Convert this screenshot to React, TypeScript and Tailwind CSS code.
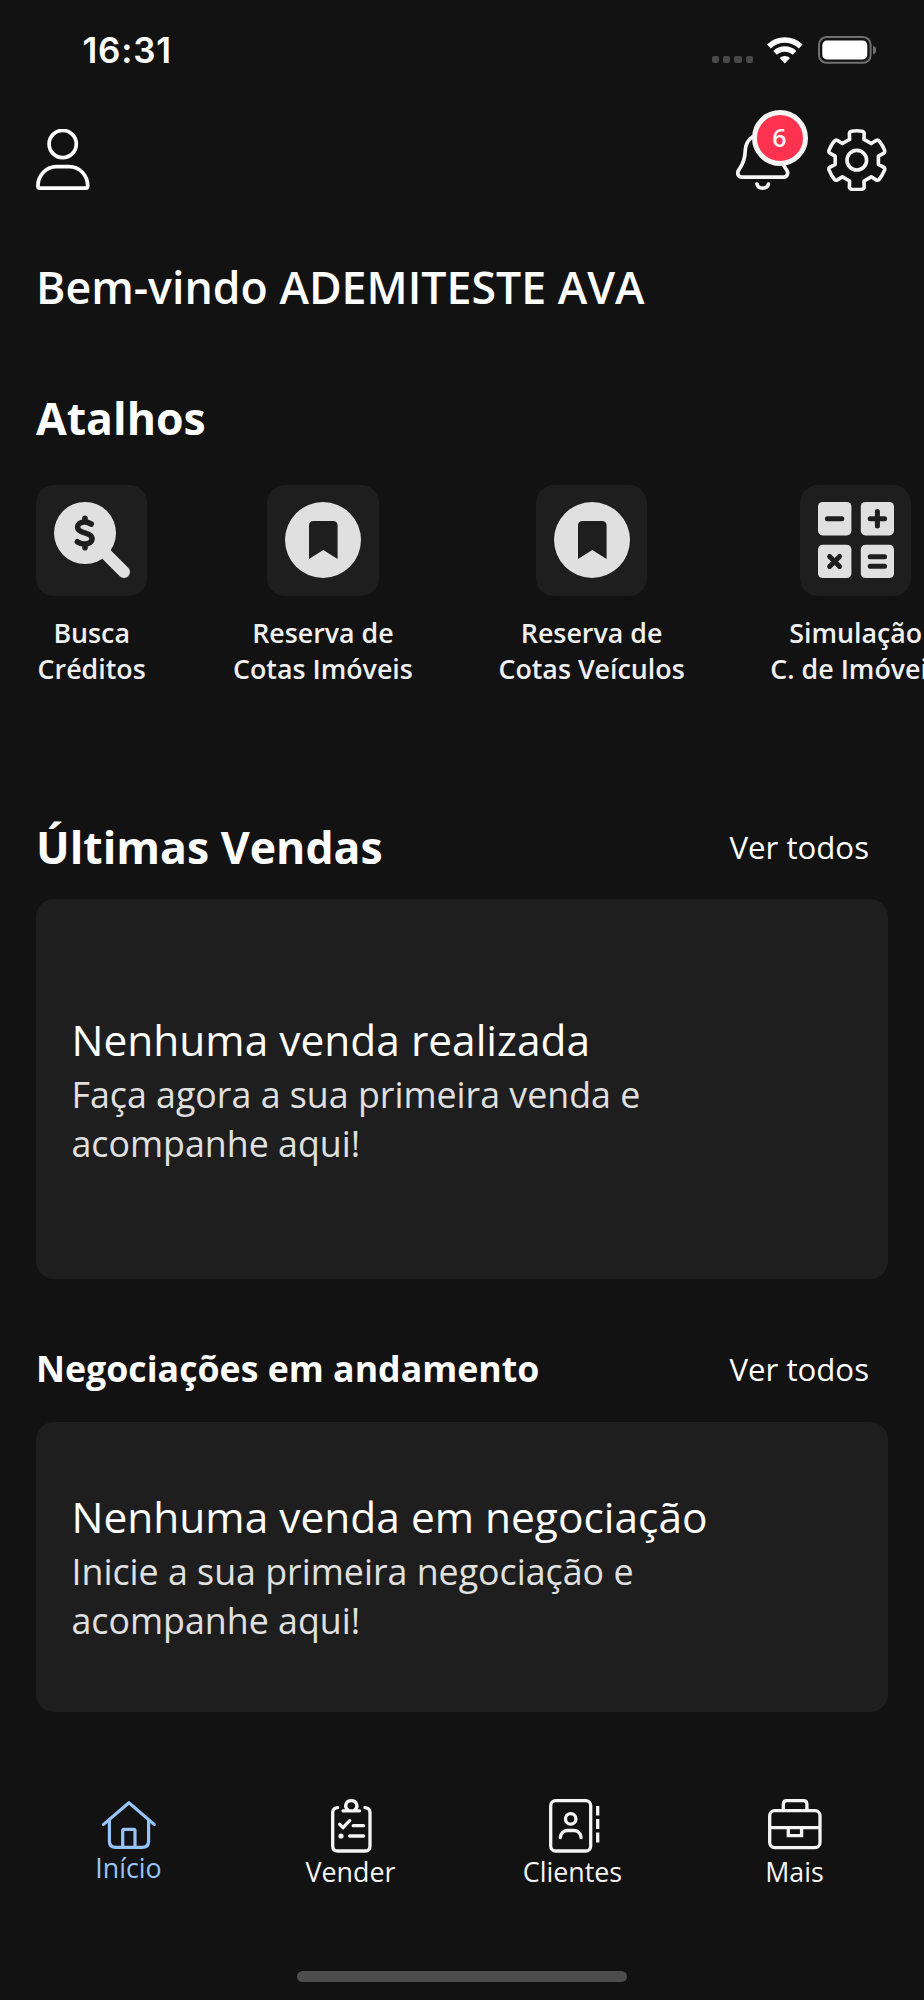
import type { ReactNode } from "react";

function rotate(x: number, y: number, deg: number) {
  const a = (deg * Math.PI) / 180;
  const rx = 29.8 + x * Math.cos(a) - y * Math.sin(a);
  const ry = 31.2 + x * Math.sin(a) + y * Math.cos(a);
  return `${rx.toFixed(2)} ${ry.toFixed(2)}`;
}

// six identical teeth around the center
const gearPath =
  [0, 60, 120, 180, 240, 300]
    .map((deg, i) => {
      const p = (x: number, y: number) => rotate(x, y, -deg);
      return `${i === 0 ? "M" : "L"}${p(7.2, -20.8)}L${p(7.4, -27)}Q${p(7.2, -28.6)} ${p(5.2, -29)}Q${p(0, -29.8)} ${p(-5.2, -29)}Q${p(-7.2, -28.6)} ${p(-7.4, -27)}L${p(-7.2, -20.8)}`;
    })
    .join("") + "Z";

function PersonIcon() {
  return (
    <svg width="54" height="62" viewBox="0 0 54 62" fill="none" stroke="currentColor" strokeWidth="3.7" strokeLinejoin="round">
      <circle cx="26.7" cy="15" r="13.6" />
      <path d="M1.9 57C1.9 46 10.5 37.7 20.5 37.7H33C43.5 37.7 51.7 46 51.7 57Q51.7 59.1 49.8 59.1H3.8Q1.9 59.1 1.9 57Z" />
    </svg>
  );
}

function BellIcon() {
  return (
    <svg width="54" height="62" viewBox="0 0 54 62" fill="none" stroke="currentColor" strokeWidth="3.7" strokeLinecap="round" strokeLinejoin="round">
      <path d="M26.6 4C17 5 9.6 12 9.3 21C9.1 29 7.5 34.5 3.2 40.3C0.4 44 2 48.2 6 48.2H47.4C51.4 48.2 53 44 50.2 40.3C45.8 34.5 44.2 29 44 21C43.7 12 36.2 5 26.6 4Z" />
      <path d="M21 55C22 60.6 31.4 60.6 32.4 55" />
    </svg>
  );
}

function GearIcon() {
  return (
    <svg width="60" height="62" viewBox="0 0 60 62" fill="none" stroke="currentColor" strokeWidth="3.6" strokeLinejoin="round">
      <path d={gearPath} />
      <circle cx="29.8" cy="31.2" r="9.8" />
    </svg>
  );
}

function SearchMoneyIcon() {
  return (
    <svg width="76" height="76" viewBox="0 0 76 76" fill="none" strokeLinecap="round">
      <circle cx="31" cy="31" r="31" fill="#e0e0e0" />
      <path d="M48 48L70 70" stroke="#e0e0e0" strokeWidth="12" />
      <path
        d="M37.2 22C34.8 20.6 32.8 20 30.6 20C26.5 20 23.6 22.3 23.6 25.3C23.6 28.6 26.6 29.8 30.7 30.9C34.9 32 38 33.3 38 36.6C38 40 34.9 42.1 31 42.1C28.2 42.1 25.6 41.2 23.4 39.8M31 16.3V20M31 42V45.7"
        stroke="#1e1e1e"
        strokeWidth="5.6"
      />
    </svg>
  );
}

function BookmarkIcon() {
  return (
    <svg width="76" height="76" viewBox="0 0 76 76">
      <circle cx="38" cy="38" r="38" fill="#e0e0e0" />
      <path d="M24 57V23.6Q24 19 28.6 19H48Q52.6 19 52.6 23.6V57L38.3 48Z" fill="#1e1e1e" />
    </svg>
  );
}

function CalculatorIcon() {
  return (
    <svg width="76" height="76" viewBox="0 0 76 76">
      <g fill="#e0e0e0">
        <rect width="33.4" height="33.4" rx="4.6" />
        <rect x="42.8" width="33.2" height="33.4" rx="4.6" />
        <rect y="42.8" width="33.4" height="33.2" rx="4.6" />
        <rect x="42.8" y="42.8" width="33.2" height="33.2" rx="4.6" />
      </g>
      <path
        d="M9.4 16.8H23.8M52.2 16.8H66.6M59.4 9.6V24M11.6 54.4L21.6 64.4M21.6 54.4L11.6 64.4M52.2 54.7H66.6M52.2 64.3H66.6"
        stroke="#1e1e1e"
        strokeWidth="5"
        strokeLinecap="round"
      />
    </svg>
  );
}

function HomeIcon() {
  return (
    <svg width="54" height="48" viewBox="0 0 54 48" fill="none" stroke="currentColor" strokeWidth="3.2" strokeLinecap="round" strokeLinejoin="round">
      <path d="M1.6 23.4L26.9 1.7L52.2 23.4" />
      <path d="M7.4 19.5V40Q7.4 46.4 13.8 46.4H40.2Q46.6 46.4 46.6 40V19.5" />
      <path d="M20.7 46V29.8Q20.7 28.3 22.2 28.3H31.5Q33 28.3 33 29.8V46" />
    </svg>
  );
}

function ClipboardIcon() {
  return (
    <svg width="41" height="54" viewBox="0 0 41 54" fill="none" stroke="currentColor" strokeWidth="3.3" strokeLinecap="round" strokeLinejoin="round">
      <path d="M6.6 8.6Q1.7 9.2 1.7 13.5V47Q1.7 52 6.7 52H34Q39 52 39 47V13.5Q39 9.2 34 8.6" />
      <path d="M17 11C12.6 7.5 15 1.7 20.3 1.7C25.6 1.7 28 7.5 23.6 11M12 11.8H28.6" />
      <path d="M8.7 25.3L12 28.7L18.7 21.7M22.2 26.7H32.6M18.7 37H32.6" />
      <circle cx="10" cy="37" r="2.6" fill="currentColor" stroke="none" />
    </svg>
  );
}

function ContactsIcon() {
  return (
    <svg className="ml-[3px]" width="51" height="54" viewBox="0 0 51 54" fill="none" stroke="currentColor" strokeWidth="3.3">
      <rect x="1.7" y="1.7" width="40" height="50.3" rx="5" />
      <circle cx="21.7" cy="19.9" r="5.2" />
      <path d="M11.3 38.6C11.8 33.8 15 31.5 18.5 31.5H24.8C28.5 31.5 31.7 33.8 32.1 38.6" strokeLinecap="round" />
      <path d="M48.7 7V16.6M48.7 20V30M48.7 33.4V43.6" />
    </svg>
  );
}

function BriefcaseIcon() {
  return (
    <svg width="54" height="51" viewBox="0 0 54 51" fill="none" stroke="currentColor" strokeWidth="3.3">
      <rect x="1.7" y="11.6" width="50.3" height="37" rx="5" />
      <path d="M15.3 11.6V5.2Q15.3 1.7 18.8 1.7H35.4Q38.9 1.7 38.9 5.2V11.6M1.7 28.6H52M20.3 28.6V36.7H33.6V28.6" />
    </svg>
  );
}

function StatusBar() {
  return (
    <div className="flex h-[100px] shrink-0 items-center justify-between pl-[82.5px] pr-[48px]">
      <span className="pt-[1px] font-['Inter',sans-serif] text-[35px] font-semibold leading-none tracking-[0.8px] text-white">16:31</span>
      <div className="flex items-center">
        <div className="mt-[19px] flex gap-[4px]">
          {[0, 1, 2, 3].map((i) => (
            <span key={i} className="size-[7.3px] rounded-[2px] bg-[#484848]" />
          ))}
        </div>
        <svg className="ml-[14px]" width="36" height="27" viewBox="0 0 36 27" fill="none" stroke="#fff">
          <path d="M1.9 9.5A22.8 22.8 0 0 1 33.7 9.5" strokeWidth="5.4" />
          <path d="M8.1 15.9A14 14 0 0 1 27.5 15.9" strokeWidth="5.3" />
          <path d="M17.8 26.4L12.6 21C15.4 18.3 20.2 18.3 23 21Z" fill="#fff" stroke="none" />
        </svg>
        <svg className="ml-[15px]" width="58" height="28" viewBox="0 0 58 28" fill="none">
          <rect x="1" y="1" width="51.6" height="25.8" rx="7.6" stroke="#717171" strokeWidth="2" />
          <rect x="4.3" y="4.6" width="45" height="18.8" rx="4.4" fill="#fff" />
          <path d="M55 9.5Q58.2 11 58.2 14Q58.2 17 55 18.5Z" fill="#717171" />
        </svg>
      </div>
    </div>
  );
}

function Shortcut({ icon, lines }: { icon: ReactNode; lines: [string, string] }) {
  return (
    <div className="flex shrink-0 flex-col items-center">
      <div className="flex size-[111.4px] items-center justify-center rounded-[18px] bg-[#1e1e1e]">{icon}</div>
      <p className="mt-[19px] whitespace-nowrap text-center text-[26.8px] font-semibold leading-[36px] text-[#f0f0f0]">
        {lines[0]}
        <br />
        {lines[1]}
      </p>
    </div>
  );
}

function EmptyCard({ className, title, lines }: { className: string; title: string; lines: [string, string] }) {
  return (
    <div className={`mx-[36px] flex shrink-0 flex-col justify-center rounded-[18px] bg-[#1e1e1e] px-[35.5px] pb-[1px] ${className}`}>
      <h3 className="text-[42.45px] leading-[60px] text-white">{title}</h3>
      <p className="text-[35.75px] leading-[49px] text-[#e0e0e0]">
        {lines[0]}
        <br />
        {lines[1]}
      </p>
    </div>
  );
}

const shortcuts: { icon: ReactNode; lines: [string, string] }[] = [
  { icon: <SearchMoneyIcon />, lines: ["Busca", "Créditos"] },
  { icon: <BookmarkIcon />, lines: ["Reserva de", "Cotas Imóveis"] },
  { icon: <BookmarkIcon />, lines: ["Reserva de", "Cotas Veículos"] },
  { icon: <CalculatorIcon />, lines: ["Simulação", "C. de Imóveis"] },
];

const tabs = [
  { label: "Início", icon: <HomeIcon />, className: "pt-[89.5px] text-[#97c4f8]", iconBox: "h-[49px]" },
  { label: "Vender", icon: <ClipboardIcon />, className: "pt-[87px] text-[#f5f5f5]", iconBox: "h-[55px]" },
  { label: "Clientes", icon: <ContactsIcon />, className: "pt-[87px] text-[#f5f5f5]", iconBox: "h-[55px]" },
  { label: "Mais", icon: <BriefcaseIcon />, className: "pt-[87px] text-[#f5f5f5]", iconBox: "h-[55px]" },
];

export default function App() {
  return (
    <div className="flex h-[2000px] w-[924px] flex-col overflow-hidden bg-[#121212] font-['Open_Sans',sans-serif] text-white">
      <StatusBar />

      <header className="flex h-[120px] shrink-0 items-center justify-between pl-[36px] pr-[37px]">
        <PersonIcon />
        <div className="flex items-center gap-[37px] text-[#f5f5f5]">
          <div className="relative">
            <BellIcon />
            <span className="absolute left-[15.5px] top-[-19.5px] flex size-[56px] items-center justify-center rounded-full border-[5px] border-[#f5f5f5] bg-[#ff334f] text-[25px] font-semibold leading-none text-[#f5f5f5]">
              6
            </span>
          </div>
          <GearIcon />
        </div>
      </header>

      <h1 className="flex h-[134px] shrink-0 items-center px-[36px] text-[44.65px] font-semibold">Bem-vindo ADEMITESTE AVA</h1>

      <h2 className="flex h-[130.5px] shrink-0 items-center px-[36px] pb-[1px] text-[44.6px] font-bold">Atalhos</h2>
      <div className="flex shrink-0 gap-[85.6px] pl-[36px]">
        {shortcuts.map((s, i) => (
          <Shortcut key={i} icon={s.icon} lines={s.lines} />
        ))}
      </div>

      <div className="mt-[108px] flex h-[104.5px] shrink-0 items-center justify-between pl-[36px] pr-[55px]">
        <h2 className="text-[44.6px] font-bold">Últimas Vendas</h2>
        <a className="text-[31.2px]">Ver todos</a>
      </div>
      <EmptyCard
        className="h-[379.5px]"
        title="Nenhuma venda realizada"
        lines={["Faça agora a sua primeira venda e", "acompanhe aqui!"]}
      />

      <div className="mt-[36px] flex h-[107px] shrink-0 items-center justify-between pl-[36px] pr-[55px]">
        <h2 className="text-[35.7px] font-bold">Negociações em andamento</h2>
        <a className="pt-[2px] text-[31.2px]">Ver todos</a>
      </div>
      <EmptyCard
        className="h-[290px]"
        title="Nenhuma venda em negociação"
        lines={["Inicie a sua primeira negociação e", "acompanhe aqui!"]}
      />

      <nav className="grid h-[259px] shrink-0 grid-cols-4 px-[18px]">
        {tabs.map((tab) => (
          <div key={tab.label} className={`flex flex-col items-center text-[26.8px] leading-[36px] ${tab.className}`}>
            <div className={`flex items-start ${tab.iconBox}`}>{tab.icon}</div>
            <span className="pr-[1px]">{tab.label}</span>
          </div>
        ))}
      </nav>
      <div className="mx-auto h-[11px] w-[330px] shrink-0 rounded-full bg-[#4d4d4d]" />
    </div>
  );
}
